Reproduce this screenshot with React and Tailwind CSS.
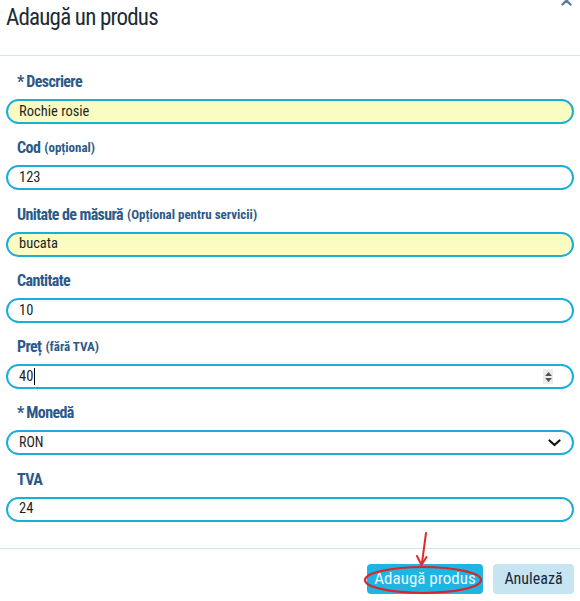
import React from "react";

const font = { fontFamily: 'Roboto, "DejaVu Sans Condensed", sans-serif' };

function Label({ req, main, sub }) {
  return (
    <div className="h-[20px] flex items-center pl-[11px] text-[16px] font-bold text-[#2c5a88] leading-[20px] [font-stretch:75%]">
      {req && <span className="mr-[2px]">*</span>}
      <span className="tracking-[-0.6px]">{main}</span>
      {sub && <span className="ml-[4px] text-[13px]">{sub}</span>}
    </div>
  );
}

function Field({ children }) {
  return <div className="flex flex-col gap-[7px]">{children}</div>;
}

function Box({ yellow, children }) {
  return (
    <div
      className={
        "h-[25px] rounded-full border-2 border-[#1aaed8] flex items-center pl-[11px] pr-[10px] text-[14.5px] text-[#1f1f1f] [font-stretch:75%] " +
        (yellow ? "bg-[#fafcc2]" : "bg-white")
      }
    >
      {children}
    </div>
  );
}

export default function App() {
  return (
    <div className="w-[580px] h-[601px] bg-white relative overflow-hidden" style={font}>
      <svg className="absolute left-[561px] top-[-5px]" width="11" height="11" viewBox="0 0 11 11">
        <path d="M1.5 1.5 L9.5 9.5 M9.5 1.5 L1.5 9.5" stroke="#5d7c9c" strokeWidth="2.4" strokeLinecap="round" />
      </svg>

      <div className="h-[56px] border-b border-[#cde8f0] pl-[6px] pt-[3px]">
        <h1 className="text-[23px] leading-[29px] text-[#1b2b37] tracking-[-0.8px] [font-stretch:75%]">Adaugă un produs</h1>
      </div>

      <div className="px-[6px] pt-[16px] flex flex-col gap-[14.3px]">
        <Field>
          <Label req main="Descriere" />
          <Box yellow>Rochie rosie</Box>
        </Field>
        <Field>
          <Label main="Cod" sub="(opțional)" />
          <Box>123</Box>
        </Field>
        <Field>
          <Label main="Unitate de măsură" sub="(Opțional pentru servicii)" />
          <Box yellow>bucata</Box>
        </Field>
        <Field>
          <Label main="Cantitate" />
          <Box>10</Box>
        </Field>
        <Field>
          <Label main="Preț" sub="(fără TVA)" />
          <Box>
            <span>40</span>
            <span className="ml-[1px] w-[1px] h-[17px] bg-black"></span>
            <span className="ml-auto mr-[9px] w-[10px] h-[15px] bg-[#ececec] flex flex-col items-center justify-center gap-[2px]">
              <svg width="7" height="4" viewBox="0 0 7 4"><path d="M0 4 L3.5 0 L7 4 Z" fill="#555" /></svg>
              <svg width="7" height="4" viewBox="0 0 7 4"><path d="M0 0 L3.5 4 L7 0 Z" fill="#555" /></svg>
            </span>
          </Box>
        </Field>
        <Field>
          <Label req main="Monedă" />
          <Box>
            <span className="text-[14px]">RON</span>
            <svg className="ml-auto mr-[1px]" width="13" height="8" viewBox="0 0 13 8">
              <path d="M1.5 1.5 L6.5 6 L11.5 1.5" fill="none" stroke="#111" strokeWidth="2.2" strokeLinecap="round" strokeLinejoin="round" />
            </svg>
          </Box>
        </Field>
        <Field>
          <Label main="TVA" />
          <Box>24</Box>
        </Field>
      </div>

      <div className="mt-[26px] border-t border-[#cde8f0] pt-[15px] pr-[6px] flex justify-end gap-[10px]">
        <button className="relative w-[116px] h-[30px] rounded-[4px] bg-[#1eb5e2] text-[#eaf7fc] text-[17px] [font-stretch:75%]">
          Adaugă produs
        </button>
        <button className="w-[81px] h-[30px] rounded-[4px] bg-[#c6e4f2] text-[#15283a] text-[16px] [font-stretch:75%]">
          Anulează
        </button>
      </div>

      <svg className="absolute left-[360px] top-[528px]" width="130" height="70" viewBox="0 0 130 70">
        <ellipse cx="63" cy="52" rx="58" ry="13" fill="none" stroke="#d8262a" strokeWidth="2.2" />
        <path d="M66 5 L62 35" stroke="#e02a2a" strokeWidth="2" strokeLinecap="round" />
        <path d="M57 28 L61.5 37 L66.5 29" fill="none" stroke="#e02a2a" strokeWidth="2" strokeLinecap="round" strokeLinejoin="round" />
      </svg>
    </div>
  );
}
